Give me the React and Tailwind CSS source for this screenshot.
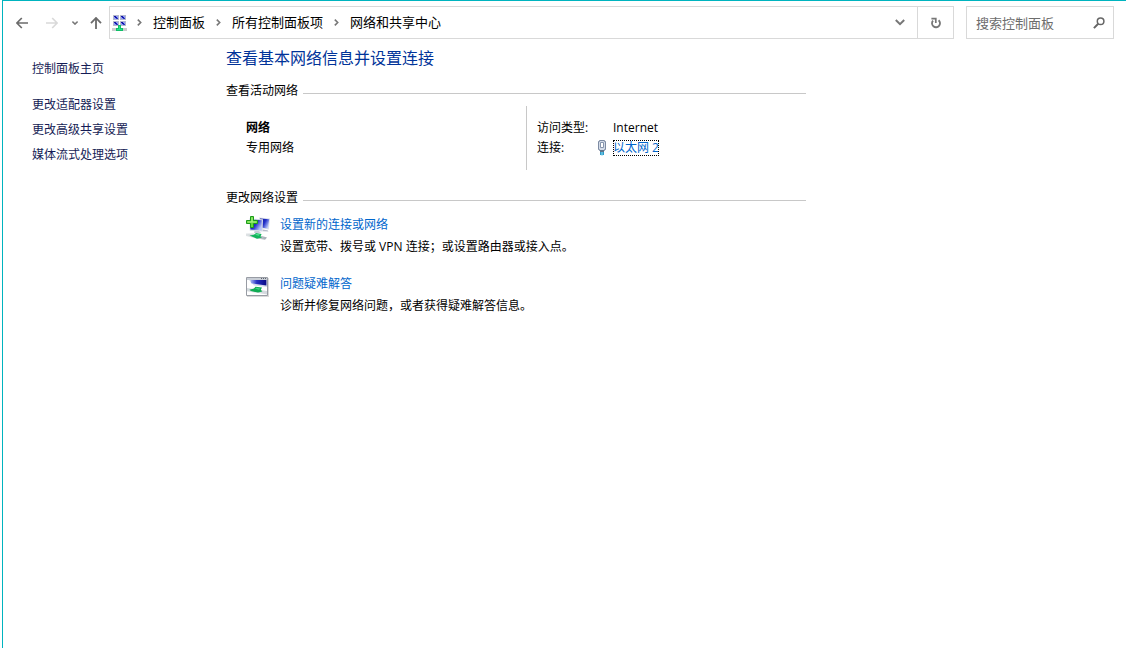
const sideLinks = ['更改适配器设置', '更改高级共享设置', '媒体流式处理选项'];

const crumbs = ['控制面板', '所有控制面板项', '网络和共享中心'];

function ChevronRight() {
    return (
        <svg className="w-[5px] h-[7px] shrink-0" viewBox="0 0 5 7" fill="none" stroke="#777" strokeWidth="1.6" aria-hidden="true">
            <path d="M0.8 0.6 3.7 3.5 0.8 6.4" />
        </svg>
    );
}

function NetworkIcon() {
    return (
        <svg className="w-4 h-4 shrink-0" viewBox="0 0 16 16" shapeRendering="crispEdges" aria-hidden="true">
            {[[1, 0], [8, 0], [1, 6], [8, 6]].map(([x, y]) => (
                <g key={`${x}-${y}`}>
                    <path fill="#b4b8cc" d={`M${x} ${y}h6v5h-6z`} />
                    <path fill="#8c9cf4" d={`M${x + 1} ${y + 1}h4v3h-4z`} />
                    <path fill="#1414a8" d={`M${x + 1} ${y + 1}h2v1h1v1h-2v-1h-1z`} />
                    <path fill="#2a34c4" d={`M${x + 3} ${y + 3}h2v1h-2z`} />
                </g>
            ))}
            <path fill="#c9cdcd" d="M0 13h15v3H0z" />
            <path fill="#0fbf68" d="M6 10h3v3h2v3H4v-3h2z" />
            <path fill="#22e389" d="M7 11h1v3h2v1H5v-1h2z" />
        </svg>
    );
}

function NewConnectionIcon() {
    return (
        <svg className="w-6 h-6" viewBox="0 0 24 24" aria-hidden="true">
            <defs>
                <linearGradient id="screen" x1="0" y1="0" x2="1" y2="0.6">
                    <stop offset="0" stopColor="#0a0c92" />
                    <stop offset="0.55" stopColor="#2230c8" />
                    <stop offset="1" stopColor="#b8c6fa" />
                </linearGradient>
                <linearGradient id="cable" x1="0" y1="0" x2="1" y2="0">
                    <stop offset="0" stopColor="#dfe3e5" />
                    <stop offset="0.5" stopColor="#cfd5d9" />
                    <stop offset="1" stopColor="#9fa8b0" />
                </linearGradient>
            </defs>
            <path fill="#d8deea" d="M13 1.6 24 2.4 22.8 13.5 14 12z" />
            <path fill="url(#screen)" d="M14 2.4 23.2 3.2 21.9 12.4 15 11.4z" />
            <path fill="#d3d9e6" d="M3.4 2.6 17 3.2 16.6 15.4 3.8 14.8z" />
            <path fill="url(#screen)" d="M4.2 3.6 15.8 4.2 15.6 14.2 4.4 13.6z" />
            <path fill="#b6bdca" d="M8.5 15.2h4.5l2 1.6H8zM16.8 13.4l4.7 .8 1 1.4-5.7-.4z" />
            <path fill="url(#cable)" d="M0 17.6 7 17.4 21 21.4 19 23.8 11 22.6 0 19.9z" />
            <path fill="#12b45c" d="M3.5 19.6 8 18.8 10 17 15.6 18 14.4 20.4 16 21.6 11 22.8z" />
            <path fill="#4bdd8d" d="M9 18.8 10.5 17.8 14 18.6 12.6 19.8z" />
            <path fill="#5fd83c" stroke="#1d9a1b" strokeWidth="1" d="M4.5.5h3v4h4v3h-4v4h-3v-4h-4v-3h4z" />
            <path fill="#b7f58e" d="M5.5 1.5h1v4h4v1h-9v-1h4z" />
        </svg>
    );
}

function TroubleshootIcon() {
    return (
        <svg className="w-6 h-6" viewBox="0 0 24 24" aria-hidden="true">
            <defs>
                <linearGradient id="panel" x1="0" y1="0" x2="1" y2="0">
                    <stop offset="0" stopColor="#a6b4f2" />
                    <stop offset="0.4" stopColor="#2531c2" />
                    <stop offset="1" stopColor="#0a0b85" />
                </linearGradient>
            </defs>
            <path fill="#d9d9d9" d="M1 3h22v19H1z" />
            <path fill="#fff" stroke="#989ca4" d="M.5 2.5h21v18H.5z" />
            <path fill="#c9ced6" d="M1 3h20v2H1z" />
            <path fill="#5e646e" d="M15 3h1v1h-1zM17 3h1v1h-1zM19 3h1v1h-1z" />
            <path fill="#d5dbea" d="M3 5h18v7L8 10.4z" />
            <path fill="url(#panel)" d="M4.5 5H20.4v5.6L5 8.2z" />
            <path fill="#d4d9de" d="M1 13 21 16V19.4L1 16.2z" />
            <path fill="#10ac53" d="M3.4 14.8 8 13.6 9.5 11.8 16 12.4 14.8 14.8 16.4 16.4 12 17.6 5 16z" />
            <path fill="#43d584" d="M9 13.6 10.4 12.8 14.4 13.4 13 14.8z" />
        </svg>
    );
}

function EthernetIcon() {
    return (
        <svg className="w-2 h-4 shrink-0" viewBox="0 0 8 16" aria-hidden="true">
            <path fill="#d3dbe8" stroke="#7d8ba3" d="M.5 1.5h1v-1h5v1h1v8h-1v1h-5v-1h-1z" />
            <path fill="#fff" stroke="#8695ad" d="M2.5 2.5h3v5h-3z" />
            <path fill="#5f7388" d="M2 10h4v2H2z" />
            <path fill="#2c9bc9" d="M2 12h4v3H2z" />
            <path fill="#8fdcf2" d="M3.5 12h1v4h-1z" />
        </svg>
    );
}

function NavBar() {
    return (
        <header className="flex items-center pt-[5px] pr-3">
            {/* History buttons */}
            <nav className="flex items-center w-[106px] shrink-0 pl-[13px]" aria-label="导航">
                <button type="button" aria-label="后退" className="w-3">
                    <svg className="w-3 h-3" viewBox="0 0 12 12" fill="none" stroke="#6b6b6b" strokeWidth="1.7">
                        <path d="M12 6H1M5.8 1 .9 6l4.9 5" />
                    </svg>
                </button>
                <button type="button" aria-label="前进" className="w-3 ml-[18px]" disabled>
                    <svg className="w-3 h-3" viewBox="0 0 12 12" fill="none" stroke="#d9d9d9" strokeWidth="1.7">
                        <path d="M0 6h11M6.2 1l4.9 5-4.9 5" />
                    </svg>
                </button>
                <button type="button" aria-label="最近浏览的位置" className="w-[6px] ml-[14px]">
                    <svg className="w-[6px] h-1" viewBox="0 0 6 4" fill="none" stroke="#777" strokeWidth="1.5">
                        <path d="M.4.6 3 3.1 5.6.6" />
                    </svg>
                </button>
                <button type="button" aria-label="上移" className="w-3 ml-3">
                    <svg className="w-3 h-3" viewBox="0 0 12 12" fill="none" stroke="#6b6b6b" strokeWidth="1.8">
                        <path d="M6 12V1M1 6.2 6 1l5 5.2" />
                    </svg>
                </button>
            </nav>

            {/* Address bar */}
            <div className="flex flex-1 min-w-0 h-[33px] border border-[#d9d9d9]">
                <div className="flex flex-1 min-w-0 items-center pl-[2px]">
                    <NetworkIcon />
                    <ol className="flex items-center gap-[11px] pl-[9px] text-[13px] leading-5 whitespace-nowrap">
                        {crumbs.map((name) => (
                            <li key={name} className="flex items-center gap-[11px]">
                                <ChevronRight />
                                <a href="#" className="pb-[2px] text-black">{name}</a>
                            </li>
                        ))}
                    </ol>
                </div>
                <button type="button" aria-label="以前的位置" className="w-[34px] flex items-center justify-center">
                    <svg className="w-[10px] h-[7px]" viewBox="0 0 10 7" fill="none" stroke="#777" strokeWidth="2">
                        <path d="M.8 1 5 5.2 9.2 1" />
                    </svg>
                </button>
                <button type="button" aria-label="刷新" className="w-9 flex items-center justify-center border-l border-[#d9d9d9]">
                    <svg className="w-[10px] h-3" viewBox="0 0 10 12" fill="none" stroke="#777" strokeWidth="1.8">
                        <path d="M7.6 3.2A4 4 0 1 1 2 3.6" />
                        <path d="M.4 1.6h4.4V6" strokeWidth="1.7" />
                    </svg>
                </button>
            </div>

            {/* Search */}
            <form className="flex items-center w-[148px] h-[33px] ml-3 pl-[9px] pr-2 border border-[#d9d9d9]">
                <input
                    type="text"
                    aria-label="搜索控制面板"
                    placeholder="搜索控制面板"
                    className="flex-1 min-w-0 text-[13px] leading-5 outline-none placeholder:text-[#6d6d6d]"
                />
                <button type="button" aria-label="搜索">
                    <svg className="w-3 h-3" viewBox="0 0 12 12" fill="none" stroke="#666">
                        <circle cx="7.6" cy="4.2" r="3.3" strokeWidth="1.5" />
                        <path d="M5.2 6.8.9 11.1" strokeWidth="2" />
                    </svg>
                </button>
            </form>
        </header>
    );
}

function SectionTitle({ children }) {
    return (
        <div className="flex items-end gap-[5px]">
            <h2 className="leading-5">{children}</h2>
            <span className="flex-1 h-px mb-[7px] bg-[#c8c8c8]" />
        </div>
    );
}

function Task({ icon, title, text }) {
    return (
        <li className="flex gap-[10px] pl-5">
            <div className="w-6 shrink-0 pt-px">{icon}</div>
            <div className="leading-5">
                <a href="#" className="block text-[#0066cc]">{title}</a>
                <p className="mt-[2px]">{text}</p>
            </div>
        </li>
    );
}

export default function App() {
    return (
        <div className="pl-[2px] bg-white">
            <div className="min-h-screen border-l border-t border-[#00b4bf] bg-white text-black text-xs font-['Open_Sans','Noto_Sans_CJK_SC',sans-serif]">
                <NavBar />

                <div className="flex">
                    {/* Sidebar */}
                    <aside className="w-[223px] shrink-0 pt-[18px] pl-[29px] text-[#151c55]">
                        <a href="#" className="block leading-6">控制面板主页</a>
                        <ul className="mt-[11px]">
                            {sideLinks.map((label) => (
                                <li key={label} className="leading-[25px]">
                                    <a href="#">{label}</a>
                                </li>
                            ))}
                        </ul>
                    </aside>

                    <main className="flex-1 max-w-[580px] pt-[7px]">
                        <h1 className="text-base leading-6 text-[#003399]">查看基本网络信息并设置连接</h1>

                        {/* Active network */}
                        <section className="mt-[11px]">
                            <SectionTitle>查看活动网络</SectionTitle>
                            <div className="flex mt-[5px] leading-5">
                                <div className="w-[300px] pl-5 pt-3 pb-3">
                                    <p className="font-bold">网络</p>
                                    <p>专用网络</p>
                                </div>
                                <dl className="flex-1 pl-[10px] py-3 border-l border-[#c8c8c8]">
                                    <div className="flex">
                                        <dt className="w-[76px]">访问类型:</dt>
                                        <dd>Internet</dd>
                                    </div>
                                    <div className="flex items-center">
                                        <dt className="w-[61px]">连接:</dt>
                                        <dd className="flex items-center gap-[7px]">
                                            <EthernetIcon />
                                            <a href="#" className="leading-4 text-[#0066cc] outline-1 outline-dotted outline-black -outline-offset-1 whitespace-nowrap">
                                                以太网 2
                                            </a>
                                        </dd>
                                    </div>
                                </dl>
                            </div>
                        </section>

                        {/* Network settings */}
                        <section className="mt-[18px]">
                            <SectionTitle>更改网络设置</SectionTitle>
                            <ul className="flex flex-col gap-[17px] mt-[7px]">
                                <Task
                                    icon={<NewConnectionIcon />}
                                    title="设置新的连接或网络"
                                    text="设置宽带、拨号或 VPN 连接；或设置路由器或接入点。"
                                />
                                <Task
                                    icon={<TroubleshootIcon />}
                                    title="问题疑难解答"
                                    text="诊断并修复网络问题，或者获得疑难解答信息。"
                                />
                            </ul>
                        </section>
                    </main>
                </div>
            </div>
        </div>
    );
}
